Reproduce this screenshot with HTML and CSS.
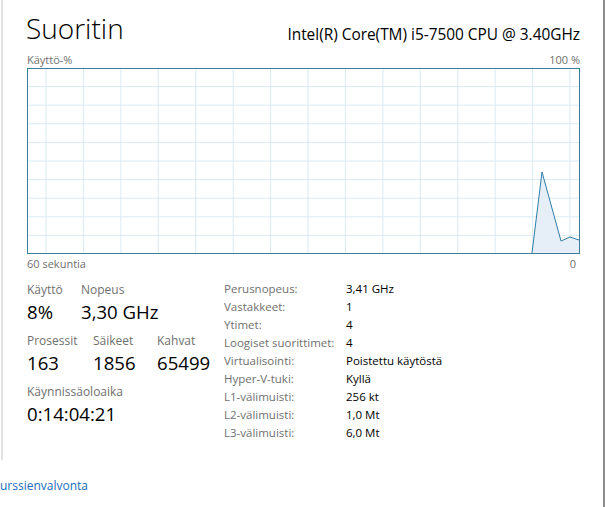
FILE: index.html
```html
<!doctype html>
<html>
<head>
	<meta charset="utf-8" />
	<title>Suoritin</title>
	<link rel="stylesheet" href="styles.css">
</head>
<body>
<div class="window">
	<div class="panel">
		<div class="head">
			<div class="title">Suoritin</div>
			<div class="model">Intel(R) Core(TM) i5-7500 CPU @ 3.40GHz</div>
		</div>

		<div class="axis top">
			<span>Käyttö-%</span>
			<span>100 %</span>
		</div>

		<svg class="graph" width="553" height="186" viewBox="0 0 553 186">
			<g class="grid">
				<line x1="19" y1="0" x2="19" y2="186" />
				<line x1="56.4" y1="0" x2="56.4" y2="186" />
				<line x1="93.9" y1="0" x2="93.9" y2="186" />
				<line x1="131.3" y1="0" x2="131.3" y2="186" />
				<line x1="168.7" y1="0" x2="168.7" y2="186" />
				<line x1="206.2" y1="0" x2="206.2" y2="186" />
				<line x1="243.6" y1="0" x2="243.6" y2="186" />
				<line x1="281" y1="0" x2="281" y2="186" />
				<line x1="318.4" y1="0" x2="318.4" y2="186" />
				<line x1="355.9" y1="0" x2="355.9" y2="186" />
				<line x1="393.3" y1="0" x2="393.3" y2="186" />
				<line x1="430.7" y1="0" x2="430.7" y2="186" />
				<line x1="468.2" y1="0" x2="468.2" y2="186" />
				<line x1="505.6" y1="0" x2="505.6" y2="186" />
				<line x1="543" y1="0" x2="543" y2="186" />

				<line x1="0" y1="18.6" x2="553" y2="18.6" />
				<line x1="0" y1="37.2" x2="553" y2="37.2" />
				<line x1="0" y1="55.8" x2="553" y2="55.8" />
				<line x1="0" y1="74.4" x2="553" y2="74.4" />
				<line x1="0" y1="93" x2="553" y2="93" />
				<line x1="0" y1="111.6" x2="553" y2="111.6" />
				<line x1="0" y1="130.2" x2="553" y2="130.2" />
				<line x1="0" y1="148.8" x2="553" y2="148.8" />
				<line x1="0" y1="167.4" x2="553" y2="167.4" />
			</g>
			<polygon class="area" points="505,185 515,104 534,173 543,169 552,172 552,185" />
			<polyline class="line" points="505,185 515,104 534,173 543,169 552,172" />
			<rect class="frame" x="0.5" y="0.5" width="552" height="185" />
		</svg>

		<div class="axis bottom">
			<span>60 sekuntia</span>
			<span>0</span>
		</div>

		<div class="stats">
			<div class="live">
				<div class="row">
					<div class="stat w54">
						<div class="label">Käyttö</div>
						<div class="value">8%</div>
					</div>
					<div class="stat">
						<div class="label">Nopeus</div>
						<div class="value">3,30 GHz</div>
					</div>
				</div>
				<div class="row">
					<div class="stat w66">
						<div class="label">Prosessit</div>
						<div class="value">163</div>
					</div>
					<div class="stat w64">
						<div class="label">Säikeet</div>
						<div class="value">1856</div>
					</div>
					<div class="stat">
						<div class="label">Kahvat</div>
						<div class="value">65499</div>
					</div>
				</div>
				<div class="row">
					<div class="stat">
						<div class="label">Käynnissäoloaika</div>
						<div class="value">0:14:04:21</div>
					</div>
				</div>
			</div>

			<dl class="specs">
				<dt>Perusnopeus:</dt>		<dd>3,41 GHz</dd>
				<dt>Vastakkeet:</dt>		<dd>1</dd>
				<dt>Ytimet:</dt>		<dd>4</dd>
				<dt>Loogiset suorittimet:</dt>	<dd>4</dd>
				<dt>Virtualisointi:</dt>	<dd>Poistettu käytöstä</dd>
				<dt>Hyper-V-tuki:</dt>		<dd>Kyllä</dd>
				<dt>L1-välimuisti:</dt>		<dd>256 kt</dd>
				<dt>L2-välimuisti:</dt>		<dd>1,0 Mt</dd>
				<dt>L3-välimuisti:</dt>		<dd>6,0 Mt</dd>
			</dl>
		</div>
	</div>

	<div class="footer">
		<a class="monitor" href="#">urssienvalvonta</a>
	</div>
</div>
</body>
</html>
```

FILE: styles.css
```css
body {
	margin: 0;
	background: #fff;
	font-family: "Open Sans", "Noto Sans", "DejaVu Sans", sans-serif;
	color: #000;
}

div.window {
	width:  603px;
	height: 507px;
	border-right: 2px solid #8c8c8c;
	overflow: hidden;
}

div.panel {
	margin-left: 1px;
	border-left: 2px solid #e3e3e3;
	height: 460px;
	padding: 0 23px 0 24px;
}

div.head {
	height: 52px;
	display: flex;
	justify-content: space-between;
	align-items: flex-end;
}

div.title {
	font-size: 28px;
	font-weight: 300;
	line-height: 36px;
	padding-bottom: 6px;
	margin-left: -1px;
}

div.model {
	font-size: 15.4px;
	line-height: 20px;
	padding-bottom: 7px;
}

div.axis {
	display: flex;
	justify-content: space-between;
	font-size: 11px;
	color: #707070;
}

div.axis.top {
	height: 16px;
	line-height: 16px;
}

div.axis.bottom {
	height: 20px;
	line-height: 20px;
	padding-right: 4px;
}

svg.graph {
	display: block;
}

svg.graph .grid line {
	stroke: #d9eaf4;
	stroke-width: 1;
}

svg.graph .area {
	fill: #e6eff7;
}

svg.graph .line {
	fill: none;
	stroke: #2f7ea8;
	stroke-width: 1;
}

svg.graph .frame {
	fill: none;
	stroke: #3b7f98;
	stroke-width: 1;
}

div.stats {
	display: flex;
	margin-top: 7px;
}

div.live {
	width: 197px;
}

div.row {
	display: flex;
	margin-bottom: 7px;
}

div.stat.w54 { width: 54px; }
div.stat.w66 { width: 66px; }
div.stat.w64 { width: 64px; }

div.label {
	font-size: 12px;
	line-height: 17px;
	color: #707070;
}

div.value {
	font-size: 18.6px;
	line-height: 27px;
}

dl.specs {
	margin: 0;
	display: grid;
	grid-template-columns: 122px auto;
	grid-auto-rows: 18px;
	font-size: 11.5px;
	line-height: 18px;
	margin-top: -1px;
}

dl.specs dt {
	color: #707070;
}

dl.specs dd {
	margin: 0;
}

div.footer {
	padding-top: 18px;
	font-size: 12px;
	line-height: 16px;
}

a.monitor,
a.monitor:visited {
	color: #1a6dbb;
	text-decoration: none;
}
```
